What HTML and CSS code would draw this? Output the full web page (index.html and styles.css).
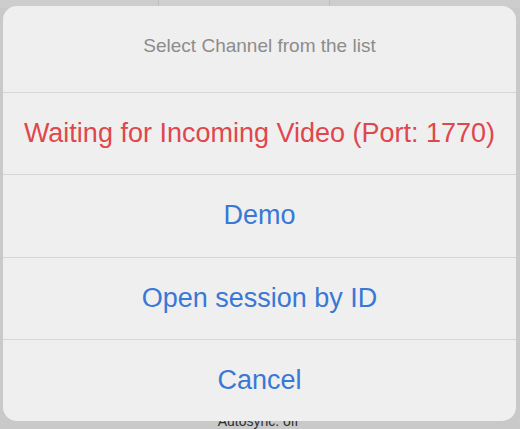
FILE: index.html
```html
<!DOCTYPE html>
<html>
<head>
<meta charset="utf-8">
<link rel="stylesheet" href="styles.css">
</head>
<body>
<div class="page">
  <div class="top-strip">
    <div class="cell left"></div>
    <div class="cell mid"></div>
    <div class="cell"></div>
  </div>
  <div class="status">Autosync: off</div>
</div>
<div class="sheet">
  <div class="title">Select Channel from the list</div>
  <div class="row destructive">Waiting for Incoming Video (Port: 1770)</div>
  <div class="row">Demo</div>
  <div class="row">Open session by ID</div>
  <div class="row">Cancel</div>
</div>
</body>
</html>
```
FILE: styles.css
```css
html, body {
  margin: 0;
  padding: 0;
}
body {
  width: 520px;
  height: 429px;
  background: #c9c9c9;
  font-family: "Liberation Sans", Arial, sans-serif;
  overflow: hidden;
  position: relative;
}
.page {
  height: 429px;
  display: flex;
  flex-direction: column;
  justify-content: space-between;
}
.top-strip {
  height: 8px;
  display: flex;
  background: #cdcdcd;
}
.cell {
  flex: 1;
}
.cell.left {
  flex: 0 0 158px;
}
.cell.mid {
  flex: 0 0 170px;
  border-left: 1px solid #bdbdbd;
  border-right: 1px solid #bdbdbd;
  background: #d0d0d0;
}
.status {
  text-align: center;
  font-size: 14px;
  line-height: 18px;
  color: #2e2e2e;
  padding-right: 4px;
  margin-bottom: -1px;
}
.sheet {
  position: absolute;
  left: 3px;
  top: 6px;
  width: 513px;
  height: 415px;
  background: #efefef;
  border-radius: 14px;
  display: flex;
  flex-direction: column;
  overflow: hidden;
}
.title {
  height: 86px;
  display: flex;
  align-items: center;
  justify-content: center;
  font-size: 19px;
  color: #8c8c8c;
  padding-bottom: 6px;
  box-sizing: border-box;
}
.row {
  flex: 1;
  display: flex;
  align-items: center;
  justify-content: center;
  border-top: 1px solid #d6d6d6;
  font-size: 27px;
  color: #3a78d6;
}
.row.destructive {
  color: #e0474d;
}
```
